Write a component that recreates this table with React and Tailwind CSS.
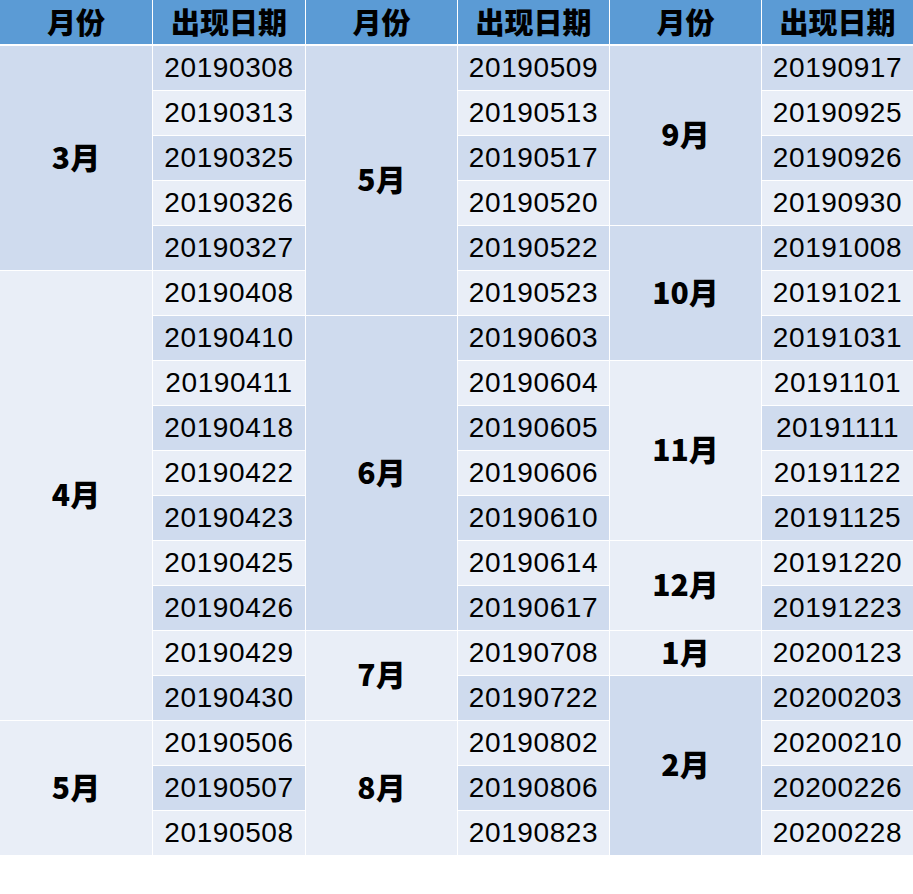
import React from "react";

const DARK = "bg-[#cfdbee]";
const LIGHT = "bg-[#e9eef7]";
const SPAN = {
  1: "row-span-1",
  2: "row-span-2",
  3: "row-span-3",
  4: "row-span-4",
  5: "row-span-5",
  6: "row-span-6",
  7: "row-span-7",
  10: "row-span-10",
};

const monthCols = [
  [
    { label: "3月", start: 1, span: 5 },
    { label: "4月", start: 6, span: 10 },
    { label: "5月", start: 16, span: 3 },
  ],
  [
    { label: "5月", start: 1, span: 6 },
    { label: "6月", start: 7, span: 7 },
    { label: "7月", start: 14, span: 2 },
    { label: "8月", start: 16, span: 3 },
  ],
  [
    { label: "9月", start: 1, span: 4 },
    { label: "10月", start: 5, span: 3 },
    { label: "11月", start: 8, span: 4 },
    { label: "12月", start: 12, span: 2 },
    { label: "1月", start: 14, span: 1 },
    { label: "2月", start: 15, span: 4 },
  ],
];

const dateCols = [
  ["20190308","20190313","20190325","20190326","20190327","20190408","20190410","20190411","20190418","20190422","20190423","20190425","20190426","20190429","20190430","20190506","20190507","20190508"],
  ["20190509","20190513","20190517","20190520","20190522","20190523","20190603","20190604","20190605","20190606","20190610","20190614","20190617","20190708","20190722","20190802","20190806","20190823"],
  ["20190917","20190925","20190926","20190930","20191008","20191021","20191031","20191101","20191111","20191122","20191125","20191220","20191223","20200123","20200203","20200210","20200226","20200228"],
];

export default function App() {
  const items = [];
  for (let r = 1; r <= 18; r++) {
    for (let g = 0; g < 3; g++) {
      const m = monthCols[g].find((x) => x.start === r);
      if (m) {
        items.push(
          <div
            key={`m-${g}-${r}`}
            className={`${SPAN[m.span]} ${m.start % 2 === 1 ? DARK : LIGHT} flex items-center justify-center pb-[5px] font-black text-[30px] leading-none text-black font-['Noto_Sans_CJK_SC',sans-serif]`}
          >
            {m.label}
          </div>
        );
      }
      items.push(
        <div
          key={`d-${g}-${r}`}
          className={`${r % 2 === 1 ? DARK : LIGHT} flex items-center justify-center pb-[1px] text-[28px] tracking-[0.6px] text-black font-['Liberation_Sans',sans-serif]`}
        >
          {dateCols[g][r - 1]}
        </div>
      );
    }
  }

  const headers = ["月份", "出现日期", "月份", "出现日期", "月份", "出现日期"];

  return (
    <div className="w-[913px] h-[894px] bg-white">
      <div className="grid grid-cols-[152px_152px_151px_151px_151px_151px] gap-x-px">
        {headers.map((h, i) => (
          <div
            key={i}
            className="h-[44px] bg-[#5b9bd5] flex items-center justify-center pb-[2px] font-black text-[29px] leading-none text-black font-['Noto_Sans_CJK_SC',sans-serif]"
          >
            {h}
          </div>
        ))}
      </div>
      <div className="mt-[2px] grid grid-cols-[152px_152px_151px_151px_151px_151px] grid-rows-[repeat(18,44px)] gap-px">
        {items}
      </div>
    </div>
  );
}
